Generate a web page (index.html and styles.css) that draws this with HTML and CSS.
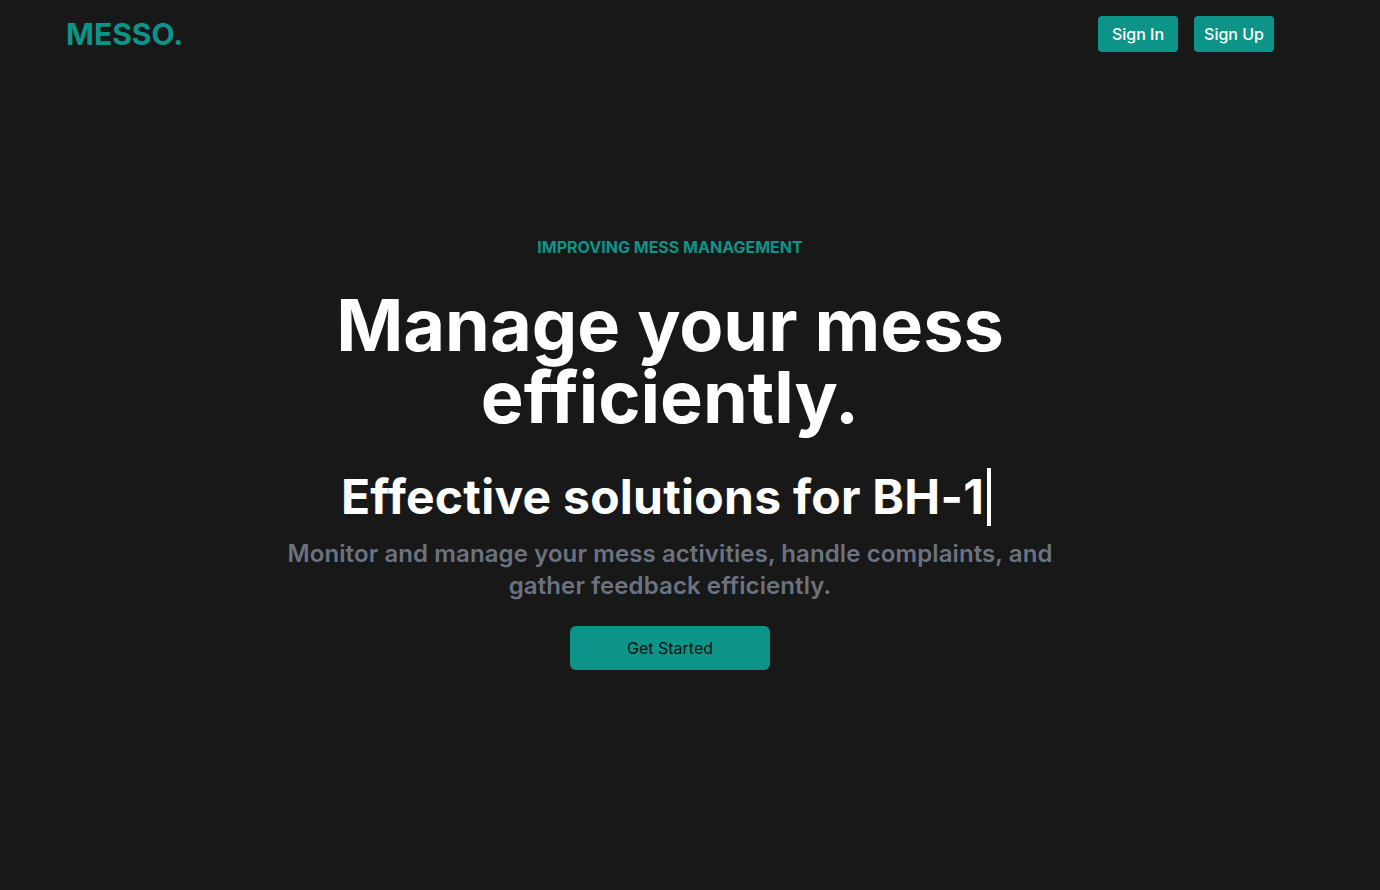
FILE: index.html
```html
<!DOCTYPE html>
<html lang="en">
<head>
<meta charset="utf-8">
<title>MESSO.</title>
<link rel="stylesheet" href="styles.css">
</head>
<body>
<header class="nav">
  <div class="logo">MESSO.</div>
  <div class="nav-actions">
    <a class="btn-nav" href="#">Sign In</a>
    <a class="btn-nav" href="#">Sign Up</a>
  </div>
</header>
<main class="hero">
  <p class="eyebrow">IMPROVING MESS MANAGEMENT</p>
  <h1 class="title">Manage your mess<br>efficiently.</h1>
  <h2 class="typed">Effective solutions for BH-1<span class="cursor"></span></h2>
  <p class="lead">Monitor and manage your mess activities, handle complaints, and gather feedback efficiently.</p>
  <a class="btn-cta" href="#">Get Started</a>
</main>
</body>
</html>
```
FILE: styles.css
```css
* { box-sizing: border-box; }
html, body { margin: 0; padding: 0; }
body {
  background: #181818;
  font-family: Inter, "Noto Sans", sans-serif;
  color: #fff;
  height: 890px;
  overflow: hidden;
}
.nav {
  display: flex;
  justify-content: space-between;
  align-items: center;
  padding: 16px 106px 0 66px;
  height: 52px;
}
.logo {
  color: #0d9488;
  font-weight: 700;
  font-size: 30px;
  line-height: 36px;
}
.nav-actions { display: flex; gap: 16px; }
.btn-nav {
  display: inline-flex;
  align-items: center;
  justify-content: center;
  width: 80px;
  height: 36px;
  background: #0d9488;
  color: #fff;
  border-radius: 4px;
  font-size: 16px;
  font-weight: 500;
  text-decoration: none;
}
.hero {
  display: flex;
  flex-direction: column;
  align-items: center;
  text-align: center;
  padding: 183px 40px 0 0;
}
.eyebrow {
  margin: 0;
  color: #0d9488;
  font-weight: 700;
  font-size: 16px;
  line-height: 24px;
}
.title {
  margin: 30px 0 0;
  font-size: 72px;
  font-weight: 700;
  line-height: 72px;
}
.typed {
  margin: 34px 8px 0 0;
  font-size: 48px;
  font-weight: 700;
  line-height: 60px;
  letter-spacing: 0.25px;
  display: flex;
  align-items: center;
}
.cursor {
  display: inline-block;
  width: 4px;
  height: 58px;
  background: #fff;
  margin-left: 3px;
}
.lead {
  margin: 11px 0 0;
  max-width: 800px;
  color: #6b7280;
  font-size: 24px;
  font-weight: 600;
  line-height: 32px;
  letter-spacing: 0.1px;
}
.btn-cta {
  margin-top: 24px;
  width: 200px;
  height: 44px;
  display: flex;
  align-items: center;
  justify-content: center;
  background: #0d9488;
  color: #111;
  border-radius: 6px;
  font-size: 16px;
  text-decoration: none;
}
```
